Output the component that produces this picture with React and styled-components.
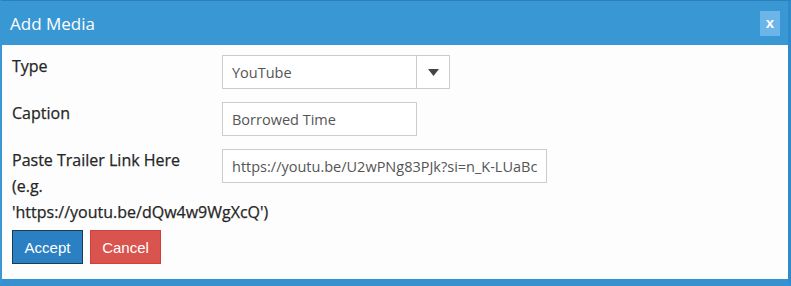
import React from 'react';
import styled, { createGlobalStyle } from 'styled-components';

const GlobalStyle = createGlobalStyle`
  html, body {
    margin: 0;
    padding: 0;
    background: #ffffff;
  }
  * {
    box-sizing: border-box;
  }
`;

const Dialog = styled.div`
  width: 791px;
  height: 286px;
  display: flex;
  flex-direction: column;
  background: #fdfdfd;
  border-left: 2px solid #3a97d4;
  border-right: 3px solid #2f8acb;
  border-bottom: 7px solid #3591d0;
  border-top: 1px solid #2b7fbd;
  font-family: 'Open Sans', Lato, sans-serif;
  color: #333;
`;

const Header = styled.div`
  height: 44px;
  flex-shrink: 0;
  display: flex;
  align-items: center;
  justify-content: space-between;
  padding: 0 8px 0 8px;
  background: #3997d4;
  color: #fff;
`;

const Title = styled.h4`
  margin: 0;
  font-size: 17px;
  font-weight: 400;
`;

const CloseButton = styled.button`
  width: 20px;
  height: 25px;
  border: 0;
  padding: 0 0 2px;
  background: #6cb5e8;
  color: #fff;
  font-family: 'Liberation Sans', Arial, sans-serif;
  font-weight: 700;
  font-size: 15px;
  line-height: 1;
  cursor: pointer;
`;

const Body = styled.div`
  flex: 1;
  padding: 10px 10px 0;
`;

const Form = styled.div`
  display: grid;
  grid-template-columns: 210px 1fr;
  row-gap: 13px;
`;

const Label = styled.label`
  font-size: 16px;
  font-weight: 400;
  line-height: 26px;
  margin-top: -2px;
  color: #262626;
  width: 185px;
  -webkit-text-stroke: 0.25px #262626;
`;

const Control = styled.div`
  display: flex;
  align-items: flex-start;
`;

const Input = styled.input`
  width: ${({ width }) => width}px;
  height: 34px;
  padding: 0 9px;
  border: 1px solid #cccccc;
  background: #fff;
  font-family: 'Open Sans', Lato, sans-serif;
  font-size: 14.5px;
  color: #555;
  outline: none;
`;

const Select = styled.div`
  width: 228px;
  height: 34px;
  display: flex;
  border: 1px solid #cccccc;
  background: #fff;
  font-size: 14.5px;
  color: #555;
`;

const SelectValue = styled.div`
  flex: 1;
  display: flex;
  align-items: center;
  padding-left: 9px;
`;

const SelectArrow = styled.div`
  width: 33px;
  display: flex;
  align-items: center;
  justify-content: center;
  border-left: 1px solid #cccccc;
`;

const Actions = styled.div`
  display: flex;
  gap: 7px;
  margin-top: 5px;
`;

const Button = styled.button`
  width: 71px;
  height: 34px;
  padding: 0;
  border: 1px solid ${({ variant }) => (variant === 'danger' ? '#d43f3a' : '#1d3a57')};
  background: ${({ variant }) => (variant === 'danger' ? '#d9534f' : '#2a80c2')};
  color: #fff;
  font-family: 'Liberation Sans', Arial, sans-serif;
  font-size: 15px;
  cursor: pointer;
`;

export default function App() {
  return (
    <>
      <GlobalStyle />
      <Dialog>
        <Header>
          <Title>Add Media</Title>
          <CloseButton>x</CloseButton>
        </Header>
        <Body>
          <Form>
            <Label>Type</Label>
            <Control>
              <Select>
                <SelectValue>YouTube</SelectValue>
                <SelectArrow>
                  <svg width="11" height="7" viewBox="0 0 11 7">
                    <path d="M0 0 H11 L5.5 7 Z" fill="#444" />
                  </svg>
                </SelectArrow>
              </Select>
            </Control>

            <Label>Caption</Label>
            <Control>
              <Input width={195} defaultValue="Borrowed Time" />
            </Control>

            <Label>
              Paste Trailer Link Here (e.g. 'https://youtu.be/dQw4w9WgXcQ')
            </Label>
            <Control>
              <Input width={325} defaultValue="https://youtu.be/U2wPNg83PJk?si=n_K-LUaBcDeFgHiJ" />
            </Control>
          </Form>
          <Actions>
            <Button>Accept</Button>
            <Button variant="danger">Cancel</Button>
          </Actions>
        </Body>
      </Dialog>
    </>
  );
}
